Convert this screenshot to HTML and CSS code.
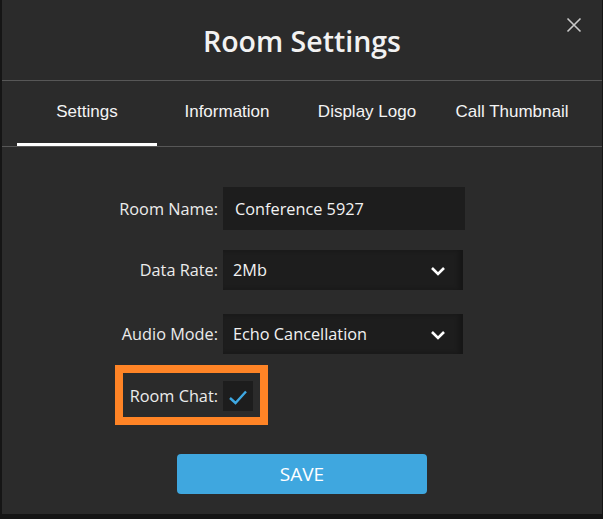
FILE: index.html
```
<!DOCTYPE html>
<html lang="en">
<head>
    <meta charset="UTF-8">
    <meta name="viewport" content="width=device-width, initial-scale=1.0">
    <title>Room Settings</title>
    <link rel="stylesheet" href="styles.css">
</head>
<body>
    <div class="modal">
        <button class="close" aria-label="Close">
            <svg width="16" height="16" viewBox="0 0 16 16"><path d="M1.5 1.5 L14.5 14.5 M14.5 1.5 L1.5 14.5" stroke="#c9c9c9" stroke-width="1.6" fill="none"/></svg>
        </button>

        <div class="modal-header">
            <h1>Room Settings</h1>
        </div>

        <!-- Tabs -->
        <div class="tabs">
            <div class="tab active">Settings</div>
            <div class="tab">Information</div>
            <div class="tab">Display Logo</div>
            <div class="tab">Call Thumbnail</div>
        </div>

        <!-- Settings form -->
        <div class="form">
            <div class="form-row row-name">
                <label for="roomName">Room Name:</label>
                <input type="text" id="roomName" value="Conference 5927">
            </div>
            <div class="form-row row-rate">
                <label>Data Rate:</label>
                <div class="select">
                    <span>2Mb</span>
                    <svg width="16" height="10" viewBox="0 0 16 10"><polyline points="2,2 8,8 14,2" stroke="#fff" stroke-width="2.6" fill="none"/></svg>
                </div>
            </div>
            <div class="form-row row-audio">
                <label>Audio Mode:</label>
                <div class="select">
                    <span>Echo Cancellation</span>
                    <svg width="16" height="10" viewBox="0 0 16 10"><polyline points="2,2 8,8 14,2" stroke="#fff" stroke-width="2.6" fill="none"/></svg>
                </div>
            </div>
            <div class="form-row row-chat">
                <label>Room Chat:</label>
                <div class="checkbox">
                    <svg width="30" height="30" viewBox="0 0 30 30"><polyline points="7,17 12.5,22 23,10.5" stroke="#3ea8e2" stroke-width="2.4" fill="none"/></svg>
                </div>
                <div class="highlight"></div>
            </div>
            <button class="save">SAVE</button>
        </div>
    </div>
</body>
</html>
```

FILE: styles.css
```
body {
    margin: 0;
    background-color: #151515;
    font-family: "Open Sans", "Noto Sans", sans-serif;
    color: #f2f2f2;
}
.modal {
    position: relative;
    width: 600px;
    height: 514px;
    margin-left: 2px;
    background: #2b2b2b;
}
.close {
    position: absolute;
    top: 17px;
    right: 20px;
    padding: 0;
    border: none;
    background: none;
    width: 16px;
    height: 16px;
}
.modal-header {
    height: 80px;
    border-bottom: 1px solid #575757;
    display: flex;
    align-items: center;
    justify-content: center;
}
h1 {
    margin: 2px 0 0 0;
    font-size: 28.5px;
    font-weight: 600;
}
.tabs {
    display: flex;
    padding-left: 15px;
    border-bottom: 1px solid #575757;
}
.tab {
    width: 140px;
    height: 65px;
    box-sizing: border-box;
    border-bottom: 3px solid transparent;
    padding-bottom: 1px;
    display: flex;
    align-items: center;
    justify-content: center;
    font-family: "Liberation Sans", Arial, sans-serif;
    font-size: 17px;
    color: #f4f4f4;
}
.tab:last-child {
    width: 150px;
}
.tab.active {
    border-bottom-color: #fff;
}
.form {
    padding-top: 40px;
}
.form-row {
    position: relative;
    display: grid;
    grid-template-columns: 216px 240px;
    column-gap: 5px;
    align-items: center;
}
.form-row label {
    text-align: right;
    font-size: 16.3px;
    color: #ececec;
}
.row-rate {
    margin-top: 20px;
}
.row-audio {
    margin-top: 24px;
}
.row-chat {
    margin-top: 27px;
    grid-template-columns: 216px 30px;
}
input {
    width: 242px;
    height: 43px;
    box-sizing: border-box;
    border: none;
    background: #1d1d1d;
    color: #f2f2f2;
    font-family: "Open Sans", "Noto Sans", sans-serif;
    font-size: 16.3px;
    padding: 0 12px;
    outline: none;
}
.select {
    height: 40px;
    background: #1d1d1d;
    box-shadow: inset -4px 0 5px rgba(0, 0, 0, 0.25);
    display: flex;
    align-items: center;
    justify-content: space-between;
    padding: 0 17px 0 10px;
    font-size: 16.3px;
}
.select svg {
    margin-top: 1px;
}
.checkbox {
    width: 30px;
    height: 30px;
    background: #1d1d1d;
}
.checkbox svg {
    display: block;
}
.highlight {
    position: absolute;
    left: 113px;
    top: -16px;
    width: 137px;
    height: 44px;
    border: 8px solid #ff8426;
}
.save {
    display: block;
    margin: 43px auto 0;
    width: 250px;
    height: 40px;
    border: none;
    border-radius: 4px;
    background: #3fa7df;
    color: #fff;
    font-family: "Open Sans", "Noto Sans", sans-serif;
    font-size: 19px;
}
```
